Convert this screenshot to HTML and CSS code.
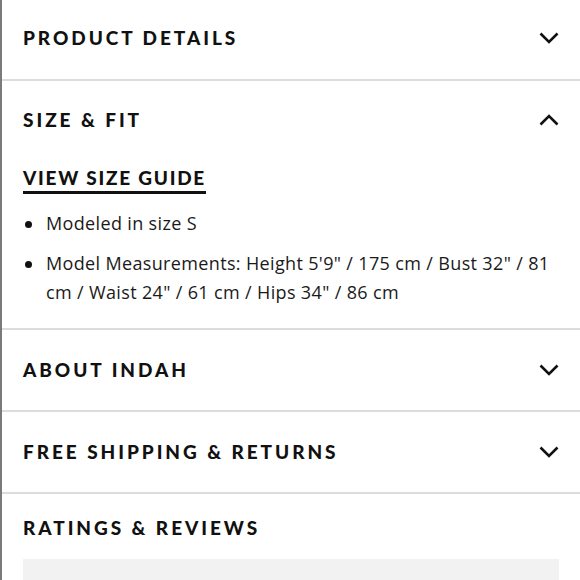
FILE: index.html
```html
<!DOCTYPE html>
<html>
<head>
<meta charset="utf-8">
<link rel="stylesheet" href="styles.css">
</head>
<body>
<div class="panel">
  <section class="acc acc-first">
    <div class="acc-head">
      <h2 class="acc-title">PRODUCT DETAILS</h2>
      <svg class="chev" width="20" height="12" viewBox="0 0 20 12"><path d="M1.5 1.5 L10 10 L18.5 1.5" fill="none" stroke="#111" stroke-width="2.6"/></svg>
    </div>
  </section>
  <section class="acc acc-open">
    <div class="acc-head">
      <h2 class="acc-title">SIZE &amp; FIT</h2>
      <svg class="chev" width="20" height="12" viewBox="0 0 20 12"><path d="M1.5 10.5 L10 2 L18.5 10.5" fill="none" stroke="#111" stroke-width="2.6"/></svg>
    </div>
    <div class="acc-body">
      <a class="guide">VIEW SIZE GUIDE</a>
      <ul class="facts">
        <li>Modeled in size S</li>
        <li>Model Measurements: Height 5'9" / 175 cm / Bust 32" / 81 cm / Waist 24" / 61 cm / Hips 34" / 86 cm</li>
      </ul>
    </div>
  </section>
  <section class="acc">
    <div class="acc-head">
      <h2 class="acc-title">ABOUT INDAH</h2>
      <svg class="chev" width="20" height="12" viewBox="0 0 20 12"><path d="M1.5 1.5 L10 10 L18.5 1.5" fill="none" stroke="#111" stroke-width="2.6"/></svg>
    </div>
  </section>
  <section class="acc">
    <div class="acc-head">
      <h2 class="acc-title">FREE SHIPPING &amp; RETURNS</h2>
      <svg class="chev" width="20" height="12" viewBox="0 0 20 12"><path d="M1.5 1.5 L10 10 L18.5 1.5" fill="none" stroke="#111" stroke-width="2.6"/></svg>
    </div>
  </section>
  <section class="ratings">
    <h2 class="acc-title">RATINGS &amp; REVIEWS</h2>
    <div class="reviews-box"></div>
  </section>
</div>
</body>
</html>
```
FILE: styles.css
```css
html, body {
  margin: 0;
  padding: 0;
  background: #fff;
}
.panel {
  border-left: 2px solid #7a7a7a;
  width: 578px;
  height: 580px;
  overflow: hidden;
  font-family: "Lato", "Open Sans", sans-serif;
  color: #111;
}
.acc {
  border-bottom: 2px solid #dcdcdc;
}
.acc-head {
  display: flex;
  align-items: center;
  justify-content: space-between;
  height: 80px;
  padding: 0 21px 0 21px;
}
.acc-first .acc-head {
  height: 76px;
  padding-bottom: 3px;
}
.acc-title {
  margin: 0;
  font-size: 19px;
  font-weight: 900;
  letter-spacing: 2.95px;
  line-height: 22px;
}
.chev {
  display: block;
}
.acc-open .acc-head {
  height: 78px;
}
.acc-body {
  padding: 8px 21px 20px 21px;
}
.guide {
  display: inline-block;
  font-size: 19px;
  font-weight: 900;
  letter-spacing: 1.75px;
  line-height: 22px;
  padding-bottom: 2px;
  border-bottom: 3px solid #111;
}
.facts {
  list-style: none;
  margin: 15px 0 0 0;
  padding: 0;
  font-family: "Open Sans", sans-serif;
  font-size: 18px;
  letter-spacing: 0.35px;
  line-height: 29.5px;
  color: #1a1a1a;
}
.facts li {
  display: flex;
  margin-bottom: 10px;
}
.facts li::before {
  content: "";
  flex: 0 0 auto;
  width: 7px;
  height: 7px;
  border-radius: 50%;
  background: #111;
  margin: 12px 14px 0 2px;
}
.facts li:last-child {
  margin-bottom: 0;
}
.ratings {
  padding: 23px 21px 0 21px;
}
.reviews-box {
  margin-top: 20px;
  height: 40px;
  background: #f2f2f2;
}
```
